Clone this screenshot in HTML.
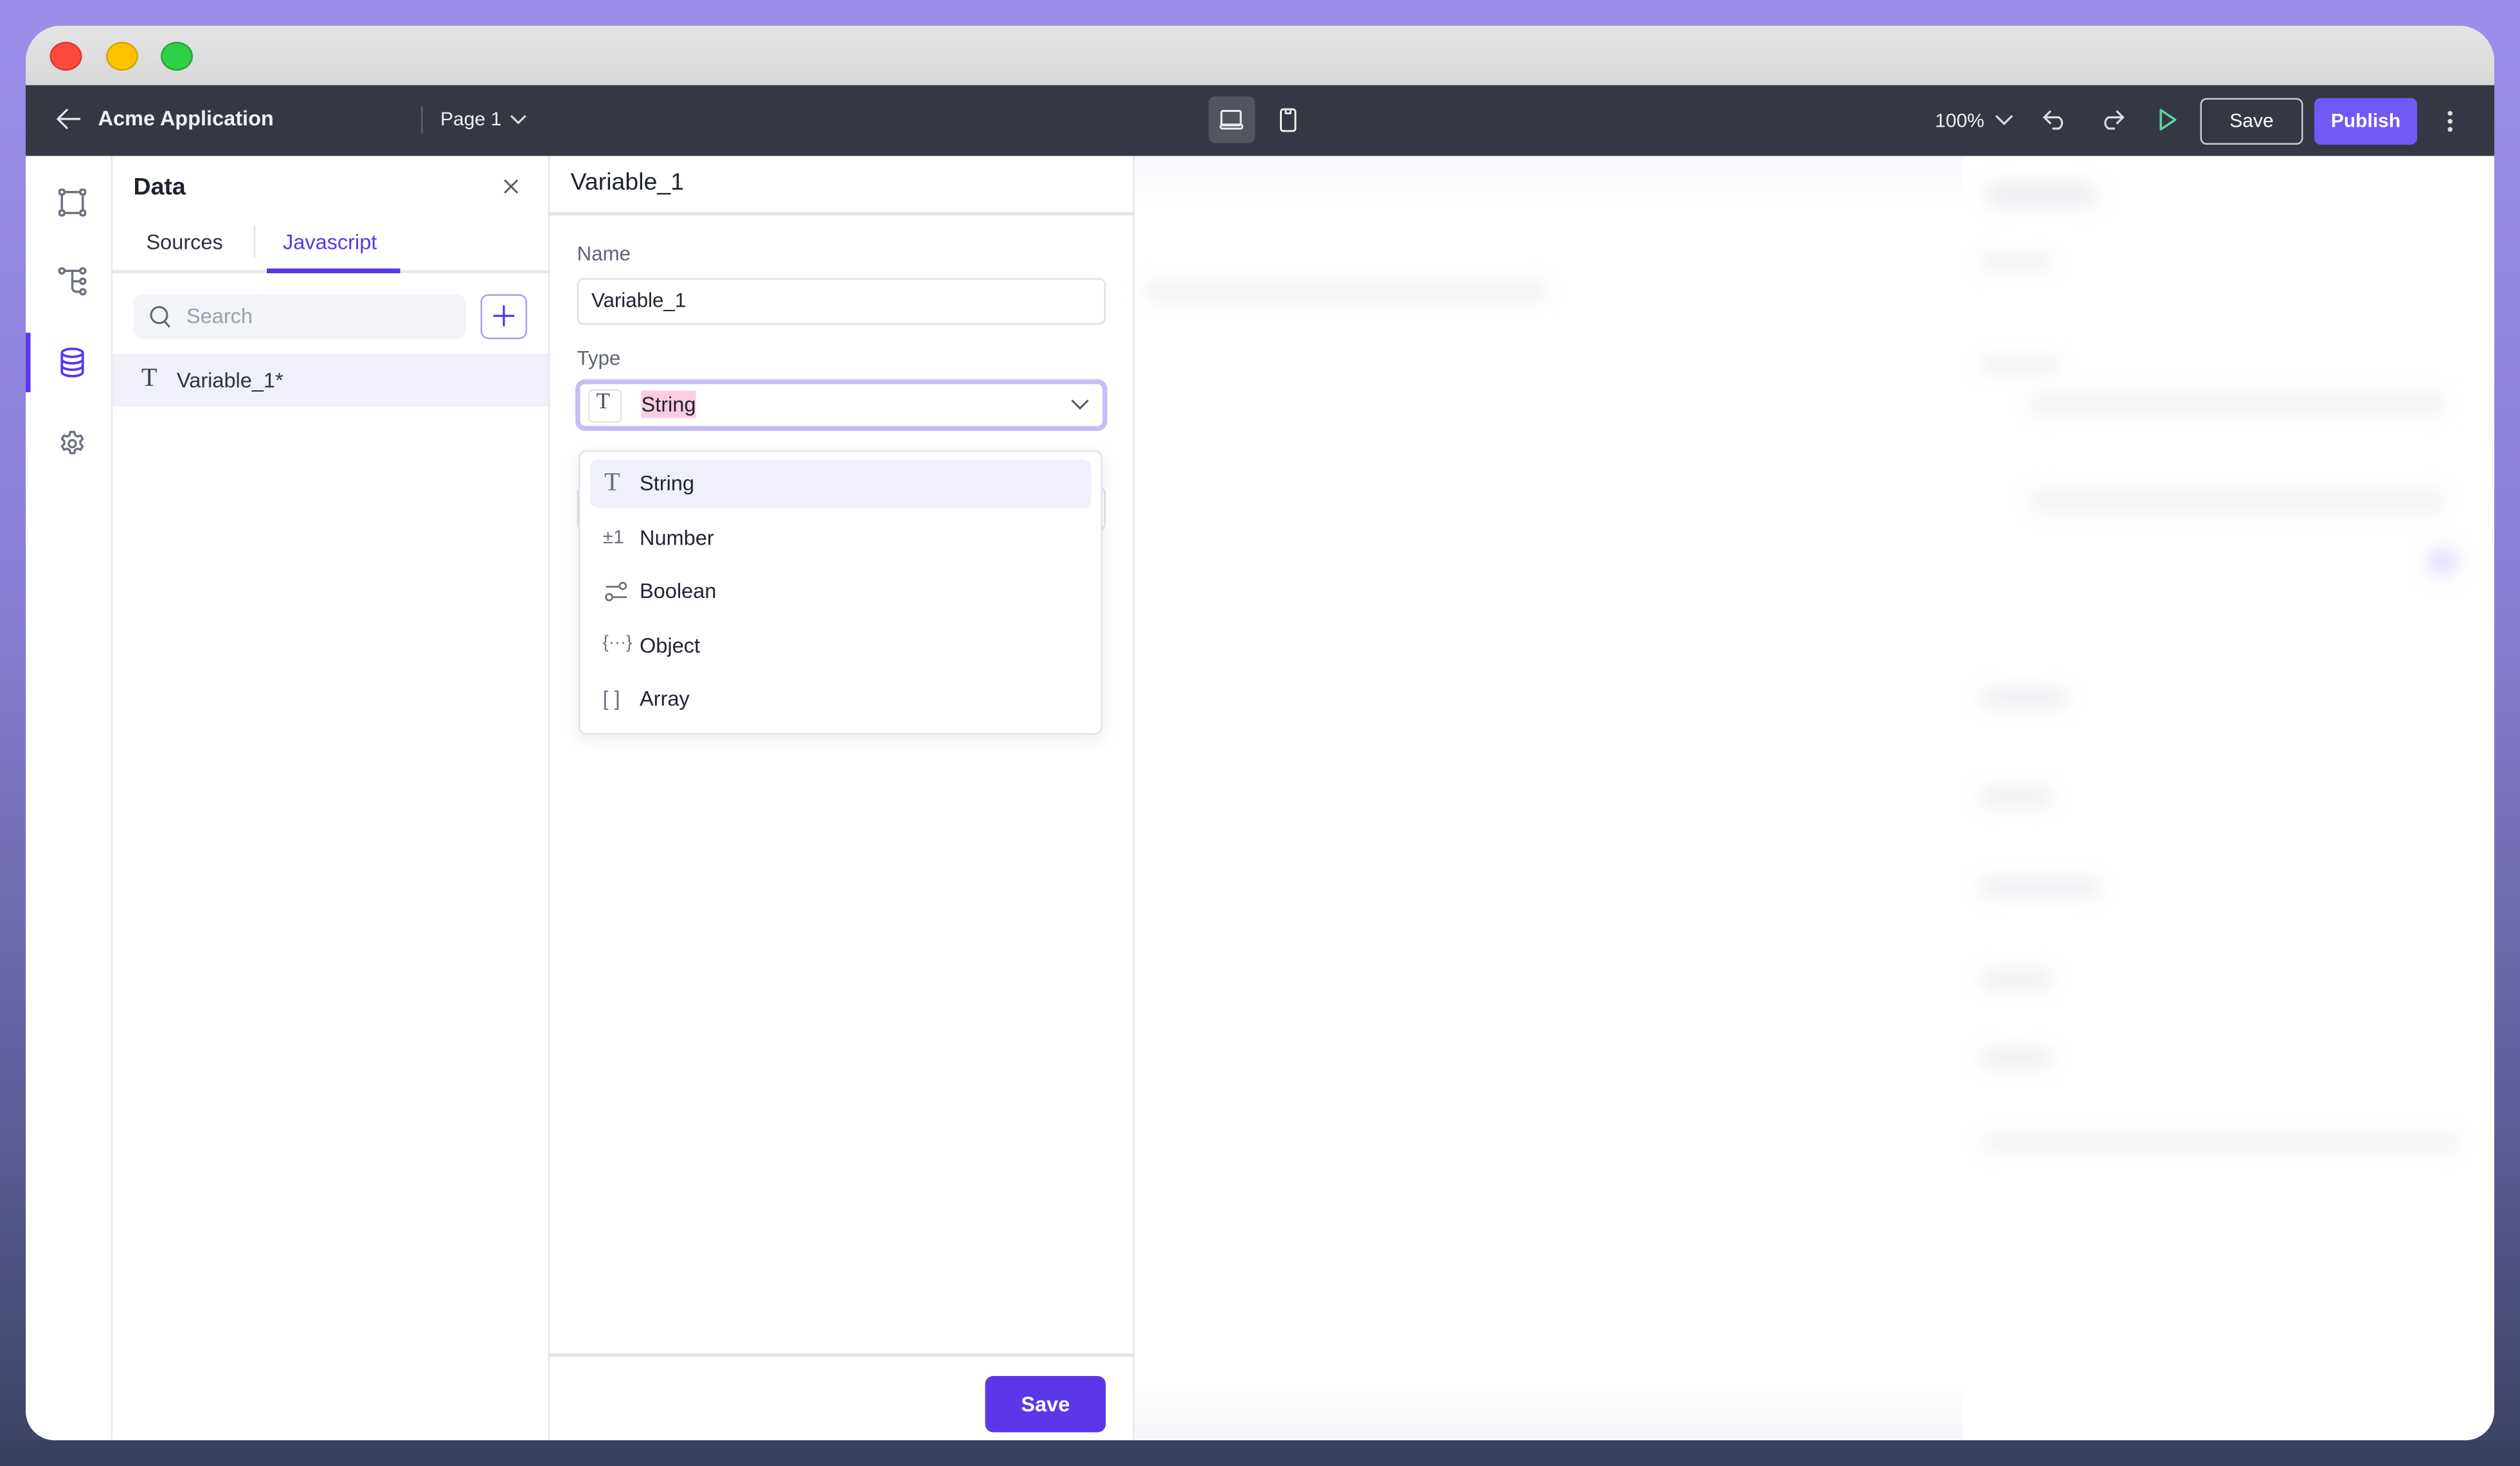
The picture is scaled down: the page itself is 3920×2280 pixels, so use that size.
<!DOCTYPE html>
<html><head><meta charset="utf-8"><style>
*{box-sizing:border-box;margin:0;padding:0}
html,body{width:3920px;height:2280px;overflow:hidden;background:#384262}
#s{position:absolute;left:0;top:0;width:1568px;height:912px;transform:scale(2.5);transform-origin:0 0;font-family:"Liberation Sans",sans-serif;background:linear-gradient(180deg,#9a8eea 0%,#8a7fd6 40%,#5f5f9a 75%,#3a4262 100%)}
.a{position:absolute}
.t{position:absolute;white-space:nowrap}
svg{position:absolute;overflow:visible}
.blur{position:absolute;background:#e9eaee;border-radius:8px;filter:blur(5px)}
</style></head><body><div id="s">
<div class="a" style="left:0;top:896px;width:1568px;height:16px;background:#384262"></div>
<div class="a" style="left:16px;top:16px;width:1536px;height:880px;border-radius:22px 22px 18px 18px;background:#fff;overflow:hidden">
 <div class="a" style="left:0;top:0;width:1536px;height:37px;background:linear-gradient(#e4e4e4,#d8d8d8)"></div>
 <div class="a" style="left:15px;top:10px;width:20px;height:18px;border-radius:50%;background:#fe4a3e;border:1px solid #d93a30"></div>
 <div class="a" style="left:50px;top:10px;width:20px;height:18px;border-radius:50%;background:#fec300;border:1px solid #d9a300"></div>
 <div class="a" style="left:84px;top:10px;width:20px;height:18px;border-radius:50%;background:#30d046;border:1px solid #22a836"></div>
 <div class="a" style="left:0;top:37px;width:1536px;height:44px;background:#343844"></div>
</div>
<!-- toolbar content -->
<svg style="left:35px;top:67px" width="16" height="14" viewBox="0 0 16 14"><path d="M15 7H2M7 1L1 7l6 6" fill="none" stroke="#e6e6ea" stroke-width="1.3"/></svg>
<div class="t" style="left:61px;top:66px;font-size:13px;font-weight:bold;color:#f0f0f3">Acme Application</div>
<div class="a" style="left:262px;top:66px;width:1px;height:17px;background:#5a5e6a"></div>
<div class="t" style="left:274px;top:67px;font-size:12px;color:#f0f0f3">Page 1</div>
<svg style="left:317px;top:71px" width="11" height="7"><path d="M1 1l4.5 4.5L10 1" fill="none" stroke="#ddd" stroke-width="1.3"/></svg>
<div class="a" style="left:752px;top:60px;width:29px;height:29px;border-radius:4px;background:#525560"></div>
<svg style="left:759px;top:68px" width="15" height="13"><rect x="1" y="1" width="12" height="9" rx="1" fill="none" stroke="#eee" stroke-width="1.2"/><rect x="0.5" y="9.5" width="13.5" height="2.5" rx="1" fill="none" stroke="#eee" stroke-width="1.2"/></svg>
<svg style="left:796px;top:67px" width="11" height="16"><rect x="1" y="1" width="9" height="13.5" rx="1.5" fill="none" stroke="#eee" stroke-width="1.2"/><path d="M4 1.5v2h3v-2" fill="none" stroke="#eee" stroke-width="1.1"/></svg>
<div class="t" style="left:1204px;top:68px;font-size:12px;color:#f0f0f3">100%</div>
<svg style="left:1241px;top:71px" width="12" height="8"><path d="M1 1l5 5 5-5" fill="none" stroke="#ddd" stroke-width="1.3"/></svg>
<svg style="left:1271px;top:68px" width="16" height="13"><path d="M5 1L1 5l4 4M1 5h9a4 4 0 010 7H6" fill="none" stroke="#ddd" stroke-width="1.3"/></svg>
<svg style="left:1306px;top:68px" width="16" height="13"><path d="M11 1l4 4-4 4M15 5H6a4 4 0 000 7h4" fill="none" stroke="#ddd" stroke-width="1.3"/></svg>
<svg style="left:1343px;top:67px" width="12" height="15"><path d="M1.5 1.5v12l9-6z" fill="none" stroke="#5ed39a" stroke-width="1.4" stroke-linejoin="round"/></svg>
<div class="a" style="left:1369px;top:61px;width:64px;height:29px;border:1px solid #c9cad0;border-radius:4px"></div>
<div class="t" style="left:1369px;top:68px;width:64px;text-align:center;font-size:12px;color:#fff">Save</div>
<div class="a" style="left:1440px;top:61px;width:64px;height:29px;background:#7059f5;border-radius:4px"></div>
<div class="t" style="left:1440px;top:68px;width:64px;text-align:center;font-size:12px;font-weight:bold;color:#fff">Publish</div>
<div class="a" style="left:1523px;top:69px;width:3px;height:3px;border-radius:50%;background:#ddd;box-shadow:0 5px 0 #ddd,0 10px 0 #ddd"></div>

<!-- rail -->
<div class="a" style="left:69px;top:97px;width:1px;height:799px;background:#e6e7ec"></div>
<div class="a" style="left:16px;top:207px;width:3px;height:37px;background:#5b37e9"></div>
<svg style="left:36px;top:117px" width="18" height="18" viewBox="0 0 18 18" fill="none" stroke="#6b7280" stroke-width="1.4"><rect x="1" y="1" width="3" height="3" rx="1"/><rect x="14" y="1" width="3" height="3" rx="1"/><rect x="1" y="14" width="3" height="3" rx="1"/><rect x="14" y="14" width="3" height="3" rx="1"/><path d="M4 2.5h10M4 15.5h10M2.5 4v10M15.5 4v10"/></svg>
<svg style="left:36px;top:166px" width="18" height="18" viewBox="0 0 18 18" fill="none" stroke="#6b7280" stroke-width="1.4"><circle cx="2.5" cy="2.5" r="1.6"/><circle cx="15.5" cy="2.5" r="1.6"/><circle cx="15.5" cy="9" r="1.6"/><circle cx="15.5" cy="15.5" r="1.6"/><path d="M4 2.5h10M9 2.5v10.5a2.5 2.5 0 002.5 2.5H14M9 9h5"/></svg>
<svg style="left:37px;top:216px" width="16" height="20" viewBox="0 0 16 20" fill="none" stroke="#5b37e9" stroke-width="1.5"><ellipse cx="8" cy="3.5" rx="6.5" ry="2.5"/><path d="M1.5 3.5v12c0 1.4 2.9 2.5 6.5 2.5s6.5-1.1 6.5-2.5v-12M1.5 7.5c0 1.4 2.9 2.5 6.5 2.5s6.5-1.1 6.5-2.5M1.5 11.5c0 1.4 2.9 2.5 6.5 2.5s6.5-1.1 6.5-2.5"/></svg>
<svg style="left:36px;top:267px" width="18" height="18" viewBox="0 0 24 24" fill="none" stroke="#6b7280" stroke-width="1.8"><path d="M10.3 2.3h3.4l.6 2.7 2 1.1 2.6-.9 1.7 2.9-2 1.9v2.2l2 1.9-1.7 2.9-2.6-.9-2 1.1-.6 2.7h-3.4l-.6-2.7-2-1.1-2.6.9-1.7-2.9 2-1.9V10l-2-1.9 1.7-2.9 2.6.9 2-1.1z" stroke-linejoin="round"/><circle cx="12" cy="12" r="3"/></svg>

<!-- data panel -->
<div class="a" style="left:341px;top:97px;width:1px;height:799px;background:#e6e7ec"></div>
<div class="t" style="left:83px;top:108px;font-size:15px;font-weight:bold;color:#1f2330">Data</div>
<svg style="left:313px;top:111px" width="10" height="10"><path d="M1 1l8 8M9 1l-8 8" stroke="#555b68" stroke-width="1.2"/></svg>
<div class="t" style="left:91px;top:143px;font-size:13px;color:#2c3140">Sources</div>
<div class="a" style="left:158px;top:140px;width:1px;height:20px;background:#e2e3e8"></div>
<div class="t" style="left:176px;top:143px;font-size:13px;color:#5b37e9">Javascript</div>
<div class="a" style="left:70px;top:168px;width:271px;height:2px;background:#e6e7ec"></div>
<div class="a" style="left:166px;top:167px;width:83px;height:3px;background:#5b37e9"></div>
<div class="a" style="left:83px;top:183px;width:207px;height:28px;border-radius:6px;background:#f3f4f8"></div>
<svg style="left:93px;top:190px" width="14" height="15"><circle cx="6" cy="6" r="5" fill="none" stroke="#5f6472" stroke-width="1.2"/><path d="M9.5 10l3 3.5" stroke="#5f6472" stroke-width="1.2"/></svg>
<div class="t" style="left:116px;top:189px;font-size:13px;color:#9aa0ae">Search</div>
<div class="a" style="left:299px;top:183px;width:29px;height:28px;border-radius:5px;border:1.5px solid #a99ef5"></div>
<svg style="left:307px;top:190px" width="13" height="13"><path d="M6.5 0v13M0 6.5h13" stroke="#5b37e9" stroke-width="1.3"/></svg>
<div class="a" style="left:70px;top:220px;width:271px;height:33px;background:#f0f0fc"></div>
<div class="t" style="left:88px;top:227px;font-size:16px;color:#3a3f4d;font-family:'Liberation Serif',serif">T</div>
<div class="t" style="left:110px;top:229px;font-size:13px;color:#2c3140">Variable_1*</div>

<!-- variable panel -->
<div class="a" style="left:705px;top:97px;width:1px;height:799px;background:#e6e7ec"></div>
<div class="t" style="left:355px;top:105px;font-size:15px;color:#1f2330">Variable_1</div>
<div class="a" style="left:342px;top:132px;width:363px;height:1.5px;background:#e4e5ea"></div>
<div class="t" style="left:359px;top:151px;font-size:12.5px;color:#5d6475">Name</div>
<div class="a" style="left:359px;top:173px;width:329px;height:29px;border:1px solid #dfe0e6;border-radius:4px"></div>
<div class="t" style="left:368px;top:180px;font-size:12.5px;color:#1f2330">Variable_1</div>
<div class="t" style="left:359px;top:216px;font-size:12.5px;color:#5d6475">Type</div>
<div class="a" style="left:359px;top:303px;width:329px;height:27px;border:1px solid #dfe0e6;border-radius:4px"></div>
<div class="a" style="left:358px;top:236px;width:331px;height:32px;border:3px solid #c7bdf6;border-radius:6px;background:#fff"></div>
<div class="a" style="left:366px;top:242px;width:21px;height:21px;border:1px solid #e2e3e8;border-radius:3px"></div>
<div class="t" style="left:371px;top:243px;font-size:14px;color:#4b5060;font-family:'Liberation Serif',serif">T</div>
<div class="t" style="left:399px;top:243px;font-size:13px;color:#1f2330;background:#fbcde0;padding:1px 0">String</div>
<svg style="left:666px;top:248px" width="12" height="8"><path d="M1 1l5 5 5-5" fill="none" stroke="#555" stroke-width="1.2"/></svg>
<!-- dropdown -->
<div class="a" style="left:360px;top:280px;width:326px;height:177px;border:1px solid #e2e3e8;border-radius:5px;background:#fff;box-shadow:0 3px 10px rgba(0,0,0,.08)"></div>
<div class="a" style="left:367px;top:286px;width:312px;height:30px;border-radius:5px;background:#f0f0fc"></div>
<div class="t" style="left:376px;top:292px;font-size:16px;color:#6b7080;font-family:'Liberation Serif',serif">T</div>
<div class="t" style="left:398px;top:293px;font-size:13px;color:#1f2330">String</div>
<div class="t" style="left:375px;top:327px;font-size:12px;color:#6b7080">±1</div>
<div class="t" style="left:398px;top:327px;font-size:13px;color:#1f2330">Number</div>
<svg style="left:376px;top:362px" width="15" height="12" fill="none" stroke="#6b7080" stroke-width="1.1"><circle cx="11.5" cy="2.5" r="2"/><circle cx="3" cy="9.5" r="2"/><path d="M1 3h8M5 9.5h9"/></svg>
<div class="t" style="left:398px;top:360px;font-size:13px;color:#1f2330">Boolean</div>
<div class="t" style="left:375px;top:394px;font-size:11px;color:#6b7080">{···}</div>
<div class="t" style="left:398px;top:394px;font-size:13px;color:#1f2330">Object</div>
<div class="t" style="left:375px;top:427px;font-size:13px;color:#6b7080">[ ]</div>
<div class="t" style="left:398px;top:427px;font-size:13px;color:#1f2330">Array</div>
<!-- footer -->
<div class="a" style="left:342px;top:842px;width:363px;height:1.5px;background:#e2e4ea"></div>
<div class="a" style="left:613px;top:856px;width:75px;height:35px;border-radius:5px;background:#5b37e9"></div>
<div class="t" style="left:613px;top:866px;width:75px;text-align:center;font-size:13px;font-weight:bold;color:#fff">Save</div>

<!-- canvas blurred -->
<div class="a" style="left:706px;top:97px;width:515px;height:30px;background:linear-gradient(#f7f7fd,#fff)"></div>
<div class="a" style="left:706px;top:860px;width:515px;height:36px;background:linear-gradient(#fff,#f6f6fb)"></div>
<div class="blur" style="left:712px;top:175px;width:250px;height:12px;background:#f1f2f4"></div>
<div class="blur" style="left:1235px;top:113px;width:70px;height:16px;background:#eeeff2"></div>
<div class="blur" style="left:1232px;top:158px;width:45px;height:10px;background:#f1f2f4"></div>
<div class="blur" style="left:1232px;top:222px;width:50px;height:10px;background:#f1f2f4"></div>
<div class="blur" style="left:1262px;top:243px;width:260px;height:16px;background:#f4f5f7"></div>
<div class="blur" style="left:1262px;top:304px;width:260px;height:16px;background:#f4f5f7"></div>
<div class="blur" style="left:1510px;top:340px;width:20px;height:18px;background:#e8e2fb"></div>
<div class="blur" style="left:1232px;top:428px;width:55px;height:12px;background:#eeeff2"></div>
<div class="blur" style="left:1232px;top:490px;width:45px;height:12px;background:#eeeff2"></div>
<div class="blur" style="left:1232px;top:546px;width:75px;height:12px;background:#eeeff2"></div>
<div class="blur" style="left:1232px;top:603px;width:45px;height:12px;background:#eeeff2"></div>
<div class="blur" style="left:1232px;top:652px;width:45px;height:12px;background:#eeeff2"></div>
<div class="blur" style="left:1232px;top:705px;width:300px;height:12px;background:#f4f5f7"></div>
</div></body></html>
